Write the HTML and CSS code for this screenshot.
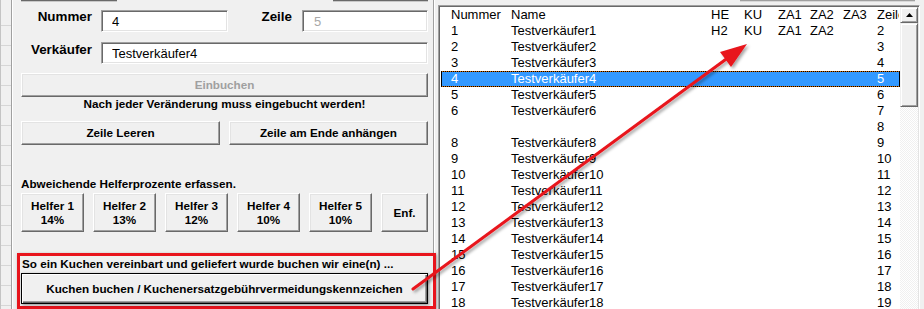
FILE: index.html
```html
<!DOCTYPE html>
<html lang="de">
<head>
    <meta charset="UTF-8">
    <title>Verkäufer buchen</title>
    <link rel="stylesheet" href="styles.css">
</head>
<body>
    <div class="app">
        <div class="sheet"></div>

        <div class="panel">
            <div class="toprow">
                <span class="stub"></span>
                <span class="stub"></span>
            </div>

            <div class="frow">
                <label class="lbl lbl-num">Nummer</label>
                <input class="field f-num" value="4">
                <label class="lbl lbl-zeile">Zeile</label>
                <input class="field f-zeile" value="5" disabled>
            </div>
            <div class="frow frow2">
                <label class="lbl lbl-num">Verkäufer</label>
                <input class="field f-name" value="Testverkäufer4">
            </div>

            <button class="btn btn-wide" disabled>Einbuchen</button>
            <p class="note">Nach jeder Veränderung muss eingebucht werden!</p>

            <div class="btnrow">
                <button class="btn">Zeile Leeren</button>
                <button class="btn">Zeile am Ende anhängen</button>
            </div>

            <p class="caption">Abweichende Helferprozente erfassen.</p>
            <div class="helfer">
                <button class="btn">Helfer 1<br>14%</button>
                <button class="btn">Helfer 2<br>13%</button>
                <button class="btn">Helfer 3<br>12%</button>
                <button class="btn">Helfer 4<br>10%</button>
                <button class="btn">Helfer 5<br>10%</button>
                <button class="btn">Enf.</button>
            </div>

            <div class="redbox">
                <p class="caption">So ein Kuchen vereinbart und geliefert wurde buchen wir eine(n) ...</p>
                <button class="btn btn-default">Kuchen buchen / Kuchenersatzgebührvermeidungskennzeichen</button>
            </div>
        </div>

        <div class="side">
            <div class="topbit"></div>
            <div class="listbox">
                <div class="rows">
                    <div class="row"><span>Nummer</span><span>Name</span><span>HE</span><span>KU</span><span>ZA1</span><span>ZA2</span><span>ZA3</span><span>Zeile</span></div>
                    <div class="row"><span>1</span><span>Testverkäufer1</span><span>H2</span><span>KU</span><span>ZA1</span><span>ZA2</span><span></span><span>2</span></div>
                    <div class="row"><span>2</span><span>Testverkäufer2</span><span></span><span></span><span></span><span></span><span></span><span>3</span></div>
                    <div class="row"><span>3</span><span>Testverkäufer3</span><span></span><span></span><span></span><span></span><span></span><span>4</span></div>
                    <div class="row sel"><span>4</span><span>Testverkäufer4</span><span></span><span></span><span></span><span></span><span></span><span>5</span></div>
                    <div class="row"><span>5</span><span>Testverkäufer5</span><span></span><span></span><span></span><span></span><span></span><span>6</span></div>
                    <div class="row"><span>6</span><span>Testverkäufer6</span><span></span><span></span><span></span><span></span><span></span><span>7</span></div>
                    <div class="row"><span></span><span></span><span></span><span></span><span></span><span></span><span></span><span>8</span></div>
                    <div class="row"><span>8</span><span>Testverkäufer8</span><span></span><span></span><span></span><span></span><span></span><span>9</span></div>
                    <div class="row"><span>9</span><span>Testverkäufer9</span><span></span><span></span><span></span><span></span><span></span><span>10</span></div>
                    <div class="row"><span>10</span><span>Testverkäufer10</span><span></span><span></span><span></span><span></span><span></span><span>11</span></div>
                    <div class="row"><span>11</span><span>Testverkäufer11</span><span></span><span></span><span></span><span></span><span></span><span>12</span></div>
                    <div class="row"><span>12</span><span>Testverkäufer12</span><span></span><span></span><span></span><span></span><span></span><span>13</span></div>
                    <div class="row"><span>13</span><span>Testverkäufer13</span><span></span><span></span><span></span><span></span><span></span><span>14</span></div>
                    <div class="row"><span>14</span><span>Testverkäufer14</span><span></span><span></span><span></span><span></span><span></span><span>15</span></div>
                    <div class="row"><span>15</span><span>Testverkäufer15</span><span></span><span></span><span></span><span></span><span></span><span>16</span></div>
                    <div class="row"><span>16</span><span>Testverkäufer16</span><span></span><span></span><span></span><span></span><span></span><span>17</span></div>
                    <div class="row"><span>17</span><span>Testverkäufer17</span><span></span><span></span><span></span><span></span><span></span><span>18</span></div>
                    <div class="row"><span>18</span><span>Testverkäufer18</span><span></span><span></span><span></span><span></span><span></span><span>19</span></div>
                </div>
                <div class="scroll">
                    <div class="sb-up">
                        <svg width="7" height="4" viewBox="0 0 7 4"><polygon points="0,4 7,4 3.5,0" fill="#000"/></svg>
                    </div>
                    <div class="sb-thumb"></div>
                    <div class="sb-track"></div>
                </div>
            </div>
        </div>

        <!-- Pfeil der Markierung -->
        <svg class="arrow" width="924" height="309" viewBox="0 0 924 309">
            <defs>
                <filter id="shadow" x="-10%" y="-10%" width="120%" height="120%">
                    <feDropShadow dx="2" dy="2" stdDeviation="1.5" flood-color="#000" flood-opacity="0.35"/>
                </filter>
            </defs>
            <g filter="url(#shadow)">
                <line x1="413" y1="289" x2="729" y2="57" stroke="#e8141c" stroke-width="3" stroke-linecap="round"/>
                <polygon points="747,44 731,67 726,60 720,52" fill="#e8141c"/>
            </g>
        </svg>
    </div>
</body>
</html>
```

FILE: styles.css
```css
body {
    margin: 0;
    background-color: #f0f0f0;
    font-family: "Liberation Sans", Arial, sans-serif;
    overflow: hidden;
}

p {
    margin: 0;
}

.app {
    display: flex;
    height: 309px;
    position: relative;
    overflow: hidden;
}

/* Tabellenrand links */
.sheet {
    width: 11px;
    flex: none;
    box-sizing: border-box;
    border-left: 1px solid #c4c4c4;
    background-image: repeating-linear-gradient(to bottom, transparent 0 19px, #d6d6d6 19px 20px);
    background-position: 0 6px;
}

.panel {
    width: 424px;
    flex: none;
    box-sizing: border-box;
    border-left: 1px solid #a0a0a0;
    border-right: 1px solid #fff;
    box-shadow: inset 1px 0 #fff, inset -1px 0 #a0a0a0;
    padding: 0 6px 0 9px;
}

.toprow {
    height: 2px;
    display: flex;
    justify-content: space-between;
}

.stub {
    width: 96px;
    height: 1px;
    background-color: #696969;
    border-bottom: 1px solid #c8c8c8;
}

.stub + .stub {
    width: 95px;
}

.frow {
    display: flex;
    height: 22px;
    margin-top: 8px;
}

.frow2 {
    margin-top: 10px;
}

.lbl {
    font-size: 13.4px;
    font-weight: bold;
    line-height: 14px;
    text-align: right;
    margin-right: 9px;
}

.lbl-num {
    width: 71px;
}

.lbl-zeile {
    width: 64px;
    margin-left: 0;
    margin-right: 10px;
}

.frow2 .lbl {
    padding-top: 1px;
}

.field {
    box-sizing: border-box;
    height: 22px;
    margin: 0;
    padding: 0 0 0 10px;
    background: #fff;
    border: 1px solid;
    border-color: #a0a0a0 #fff #fff #a0a0a0;
    box-shadow: inset 1px 1px #696969, inset -1px -1px #e3e3e3;
    font-family: "Liberation Sans", Arial, sans-serif;
    font-size: 13px;
    color: #000;
    outline: none;
}

.f-num {
    width: 127px;
}

.f-zeile {
    width: 126px;
    padding-left: 11px;
    color: #a8a8a8;
}

.f-name {
    width: 327px;
}

.btn {
    display: block;
    box-sizing: border-box;
    margin: 0;
    padding: 0;
    background-color: #f0f0f0;
    border: 1px solid;
    border-color: #fff #696969 #696969 #fff;
    box-shadow: inset -1px -1px #a0a0a0, inset 1px 1px #e3e3e3;
    font-family: "Liberation Sans", Arial, sans-serif;
    font-size: 11.7px;
    font-weight: bold;
    color: #000;
    line-height: 14px;
}

.btn:disabled {
    color: #a0a0a0;
}

.btn-wide {
    width: 100%;
    height: 24px;
    margin-top: 9px;
}

.note,
.caption {
    font-size: 11.7px;
    font-weight: bold;
    line-height: 14px;
}

.note {
    text-align: center;
}

.btnrow {
    display: flex;
    gap: 9px;
    margin-top: 10px;
}

.btnrow .btn {
    flex: 1;
    height: 24px;
}

.caption {
    margin-top: 32px;
}

.helfer {
    display: flex;
    gap: 9px;
    margin-top: 2px;
}

.helfer .btn {
    flex: 0 0 63px;
    height: 39px;
}

.helfer .btn:last-child {
    flex: 1;
}

.redbox {
    margin: 21px -8px 0 -4px;
    height: 56px;
    box-sizing: border-box;
    border: 3px solid #e8141c;
    padding: 1px 5px 0 1px;
    box-shadow: 1px 1px 3px rgba(0, 0, 0, .35);
}

.redbox .caption {
    margin: 0 0 2px 1px;
}

.btn-default {
    width: 100%;
    height: 31px;
    border: 1px solid #000;
    box-shadow: inset 1px 1px #fff, inset -1px -1px #696969, inset -2px -2px #a0a0a0, 1px 1px 3px rgba(0, 0, 0, .4);
}

/* Liste rechts */
.side {
    flex: 1;
    padding-left: 3px;
}

.topbit {
    width: 175px;
    height: 1px;
    margin-left: 302px;
    background-color: #a0a0a0;
    border-bottom: 1px solid #d8d8d8;
}

.listbox {
    width: 482px;
    height: 320px;
    margin-top: 3px;
    box-sizing: border-box;
    display: flex;
    background: #fff;
    border: 1px solid;
    border-color: #a0a0a0 #fff #fff #a0a0a0;
    box-shadow: inset 1px 1px #696969, inset -1px -1px #e3e3e3;
    padding: 1px;
}

.rows {
    width: 460px;
    padding-left: 1px;
    box-sizing: border-box;
}

.row {
    display: grid;
    grid-template-columns: 60px 200px 33px 34px 32px 33px 34px 40px;
    height: 16px;
    box-sizing: border-box;
    border: 1px solid transparent;
    padding-left: 9px;
    overflow: hidden;
    white-space: nowrap;
    font-size: 13px;
    line-height: 14px;
    color: #000;
}

.row.sel {
    background-color: #3399ff;
    color: #fff;
    border-image: repeating-linear-gradient(90deg, #000 0 1px, #d46a00 1px 2px) 1;
}

.scroll {
    width: 18px;
    display: flex;
    flex-direction: column;
}

.sb-up,
.sb-thumb {
    box-sizing: border-box;
    background-color: #f0f0f0;
    border: 1px solid;
    border-color: #f0f0f0 #696969 #696969 #f0f0f0;
    box-shadow: inset 1px 1px #fff, inset -1px -1px #a0a0a0;
}

.sb-up {
    height: 16px;
    display: flex;
    align-items: center;
    justify-content: center;
}

.sb-thumb {
    height: 84px;
}

.sb-track {
    flex: 1;
    background-color: #fff;
    background-image: repeating-conic-gradient(#f0f0f0 0 25%, #fff 0 50%);
    background-size: 2px 2px;
}

.arrow {
    position: absolute;
    top: 0;
    left: 0;
    pointer-events: none;
}
```
